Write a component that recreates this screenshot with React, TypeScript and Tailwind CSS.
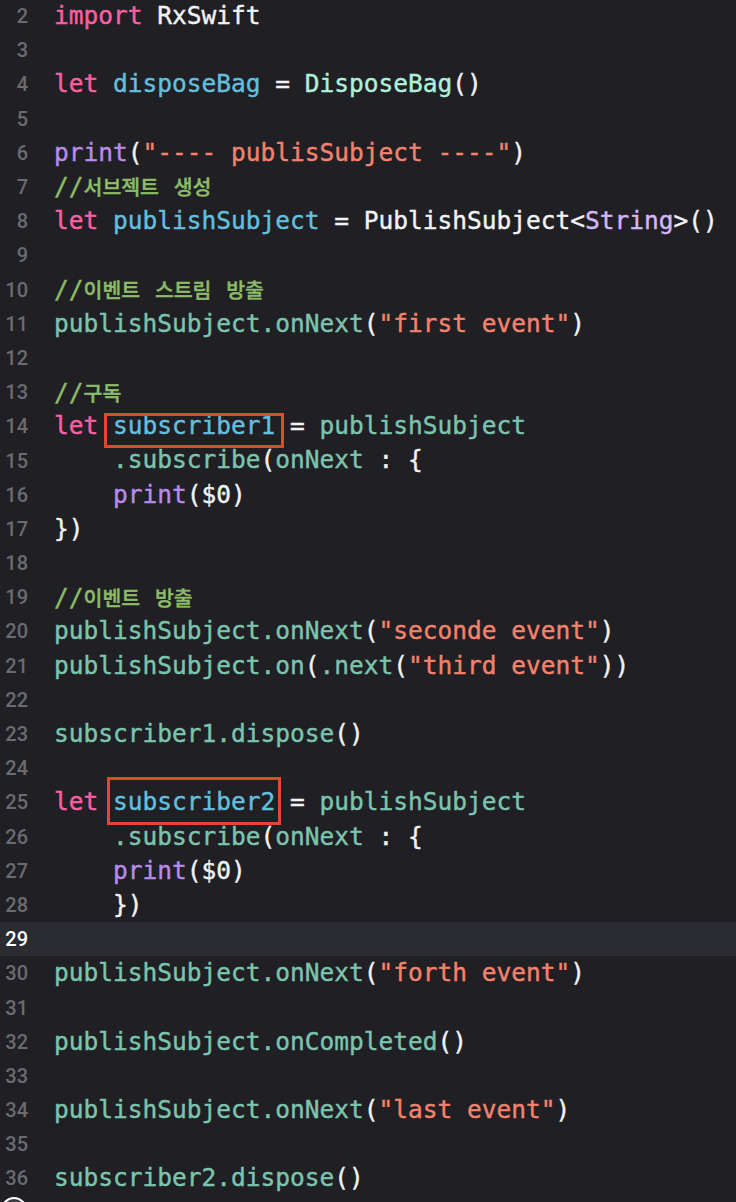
import React from "react";

type Tok = [string, string] | { box: 1 | 2; text: string } | { ko: string };

const K = "text-[#fc5fa3]";
const D = "text-[#64bfdf]";
const T = "text-[#aef0dc]";
const W = "text-[#f2f2f2]";
const F = "text-[#b98be8]";
const S = "text-[#f4826c]";
const C = "text-[#8cbc66]";
const M = "text-[#7cc4ae]";
const P = "text-[#d3b8f5]";

// line number -> tokens
const lines: [number, Tok[]][] = [
    [2, [["import", K], [" RxSwift", W]]],
    [3, []],
    [4, [["let", K], [" ", W], ["disposeBag", D], [" = ", W], ["DisposeBag", T], ["()", W]]],
    [5, []],
    [6, [["print", F], ["(", W], ['"---- publisSubject ----"', S], [")", W]]],
    [7, [["//", C], {ko: "서브젝트"}, [" ", C], {ko: "생성"}]],
    [8, [["let", K], [" ", W], ["publishSubject", D], [" = PublishSubject<", W], ["String", P], [">()", W]]],
    [9, []],
    [10, [["//", C], {ko: "이벤트"}, [" ", C], {ko: "스트림"}, [" ", C], {ko: "방출"}]],
    [11, [["publishSubject.onNext", M], ["(", W], ['"first event"', S], [")", W]]],
    [12, []],
    [13, [["//", C], {ko: "구독"}]],
    [14, [["let", K], [" ", W], {box: 1, text: "subscriber1"}, [" = ", W], ["publishSubject", M]]],
    [15, [["    ", W], [".subscribe", M], ["(", W], ["onNext", M], [" : {", W]]],
    [16, [["    ", W], ["print", F], ["($0)", W]]],
    [17, [["})", W]]],
    [18, []],
    [19, [["//", C], {ko: "이벤트"}, [" ", C], {ko: "방출"}]],
    [20, [["publishSubject.onNext", M], ["(", W], ['"seconde event"', S], [")", W]]],
    [21, [["publishSubject.on", M], ["(", W], [".next", M], ["(", W], ['"third event"', S], ["))", W]]],
    [22, []],
    [23, [["subscriber1.dispose", M], ["()", W]]],
    [24, []],
    [25, [["let", K], [" ", W], {box: 2, text: "subscriber2"}, [" = ", W], ["publishSubject", M]]],
    [26, [["    ", W], [".subscribe", M], ["(", W], ["onNext", M], [" : {", W]]],
    [27, [["    ", W], ["print", F], ["($0)", W]]],
    [28, [["    ", W], ["})", W]]],
    [29, []],
    [30, [["publishSubject.onNext", M], ["(", W], ['"forth event"', S], [")", W]]],
    [31, []],
    [32, [["publishSubject.onCompleted", M], ["()", W]]],
    [33, []],
    [34, [["publishSubject.onNext", M], ["(", W], ['"last event"', S], [")", W]]],
    [35, []],
    [36, [["subscriber2.dispose", M], ["()", W]]],
];

const Token = ({tok}: { tok: Tok }) => {
    if (Array.isArray(tok)) {
        return <span className={tok[1]}>{tok[0]}</span>;
    }
    if ("ko" in tok) {
        return (
            <span className={`${C} font-['Noto_Sans_CJK_KR',sans-serif] text-[20.5px] font-medium`}>{tok.ko}</span>
        );
    }
    return (
        <span className={`relative inline-block ${D}`}>
            {tok.text}
            {tok.box === 1 ? (
                <span className="absolute -left-[9px] -right-[9px] top-[4px] -bottom-[5px] border-[3px] border-[#e4472d]"/>
            ) : (
                <span className="absolute -left-[6px] -right-[6px] -top-[8px] -bottom-[5px] border-[3px] border-[#e4472d]"/>
            )}
        </span>
    );
};

export default function App() {
    return (
        <div className="relative w-[736px] h-[1202px] overflow-hidden bg-[#1f1f24]">
            <div className="-mt-px flex flex-col">
                {lines.map(([n, toks]) => (
                    <div key={n}
                         className={`flex h-[34.2px] items-center ${n === 29 ? "bg-[#2b2c32]" : ""}`}>
                        <span
                            className={`w-[28px] shrink-0 text-right font-['Roboto',sans-serif] text-[20px] font-medium ${n === 29 ? "text-white" : "text-[#6b6b70]"}`}>
                            {n}
                        </span>
                        <span
                            className="pl-[26px] whitespace-pre leading-[34.2px] font-['DejaVu_Sans_Mono','Noto_Sans_CJK_KR',monospace] text-[24.5px] [-webkit-text-stroke:0.4px]">
                            {toks.map((t, i) => <Token key={i} tok={t}/>)}
                        </span>
                    </div>
                ))}
            </div>
            {/* cursor-like circle at the bottom edge */}
            <div
                className="absolute left-[1px] top-[1197px] w-[26px] h-[26px] rounded-full border-2 border-white bg-[#3a3a3f]"/>
        </div>
    );
}
